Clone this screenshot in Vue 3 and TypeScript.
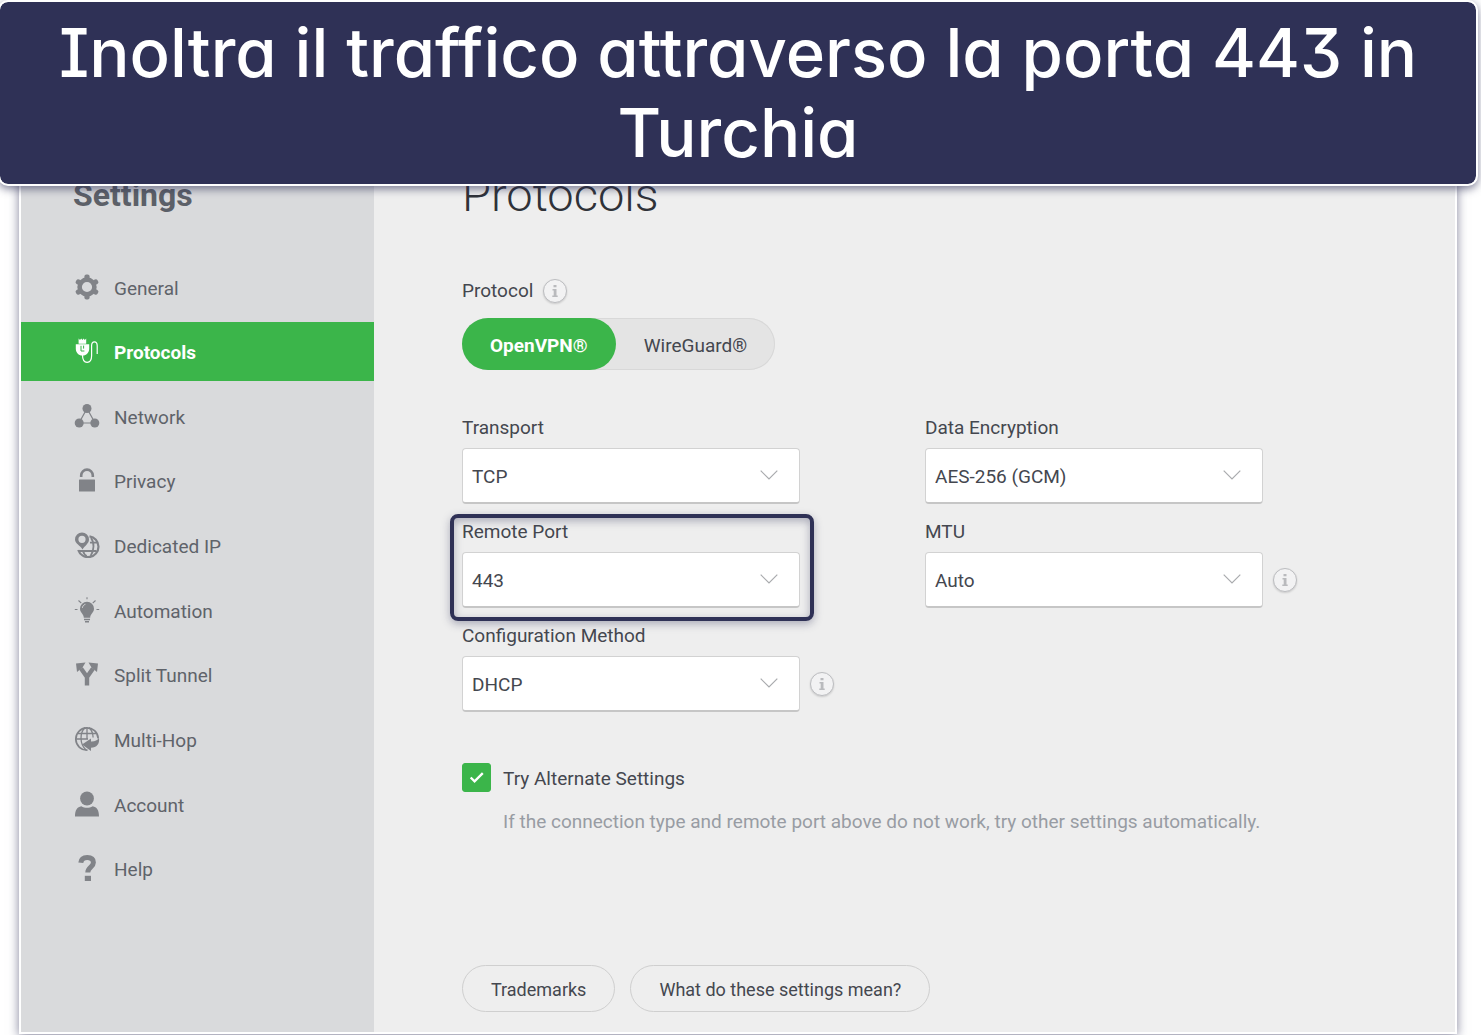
<script setup lang="ts">
import { ref } from 'vue'

type Field = {
  id: string
  label: string
  value: string
  options: string[]
  info?: boolean
  highlight?: boolean
}

const menu = [
  { id: 'general', label: 'General' },
  { id: 'protocols', label: 'Protocols' },
  { id: 'network', label: 'Network' },
  { id: 'privacy', label: 'Privacy' },
  { id: 'dedicated', label: 'Dedicated IP' },
  { id: 'automation', label: 'Automation' },
  { id: 'split', label: 'Split Tunnel' },
  { id: 'multihop', label: 'Multi-Hop' },
  { id: 'account', label: 'Account' },
  { id: 'help', label: 'Help' },
]
const active = ref('protocols')

const protocols = ['OpenVPN®', 'WireGuard®']
const protocol = ref('OpenVPN®')

const fields = ref<Field[]>([
  { id: 'transport', label: 'Transport', value: 'TCP', options: ['TCP', 'UDP'] },
  { id: 'encryption', label: 'Data Encryption', value: 'AES-256 (GCM)', options: ['AES-256 (GCM)', 'AES-128 (GCM)'] },
  { id: 'port', label: 'Remote Port', value: '443', options: ['443', '80', '8443'], highlight: true },
  { id: 'mtu', label: 'MTU', value: 'Auto', options: ['Auto', 'Small Packets'], info: true },
  { id: 'method', label: 'Configuration Method', value: 'DHCP', options: ['DHCP', 'Static'], info: true },
])
const alternate = ref(true)
</script>

<template>
  <div class="page">
    <header class="banner">Inoltra il traffico attraverso la porta 443 in Turchia</header>

    <div class="window">
      <aside class="sidebar">
        <h2 class="sidebar-title">Settings</h2>
        <nav class="menu">
          <a
            v-for="item in menu"
            :key="item.id"
            href="#"
            class="menu-item"
            :class="{ active: item.id === active }"
            @click.prevent="active = item.id"
          >
            <svg class="menu-icon" viewBox="0 0 26 26" aria-hidden="true">
              <g v-if="item.id === 'general'">
                <circle cx="13" cy="13" r="7.4" fill="none" stroke="currentColor" stroke-width="4.6" />
                <g fill="currentColor">
                  <rect v-for="a in [0, 60, 120, 180, 240, 300]" :key="a" x="10.4" y="0.5" width="5.2" height="5" rx="2" :transform="`rotate(${a} 13 13)`" />
                </g>
              </g>
              <g v-else-if="item.id === 'protocols'">
                <path d="M4.600 .500l1.400 1.500 1.200-1.500 1.200 1.500 1.200-1.500 1.200 1.500 1.400-1.500v5.200H4.600zM1.800 6.200h13.400v4.600c0 3.600-2.600 6.200-5 6.600H6.800c-2.400-.4-5-3-5-6.600z" fill="currentColor" />
                <path d="M7 7.800v5.200h3.400M9.600 7.600v3" fill="none" stroke="#3bb54a" stroke-width="1" />
                <path d="M8.500 17c0 5 1.200 7.300 4.600 7.300 3.600 0 4.500-2.500 4.500-6.500V7.800c0-2.700 1-4 2.800-4s2.800 1.400 2.800 4V16" fill="none" stroke="currentColor" stroke-width="1.200" />
              </g>
              <g v-else-if="item.id === 'network'">
                <path d="M13 5.500L5 20h16z" fill="none" stroke="currentColor" stroke-width="1.200" />
                <g fill="currentColor">
                  <circle cx="13" cy="5.500" r="4.500" />
                  <circle cx="5.200" cy="20" r="4.500" />
                  <circle cx="20.800" cy="20" r="4.500" />
                </g>
              </g>
              <g v-else-if="item.id === 'privacy'">
                <rect x="5" y="12.500" width="16" height="12" rx="0.500" fill="currentColor" />
                <path d="M7.200 10V8.400a5.800 5.800 0 0 1 11.600 0V10" fill="none" stroke="currentColor" stroke-width="2.600" />
              </g>
              <g v-else-if="item.id === 'dedicated'">
                <path d="M15.500 4.400A10.400 10.400 0 1 1 4.200 18" fill="none" stroke="currentColor" stroke-width="2.200" />
                <path d="M17 6c3.500 4.500 3.300 12-.4 18M9 19c.8 2.600 2.200 4.300 3.800 5M16 10.600h8M5 19h17.500" fill="none" stroke="currentColor" stroke-width="1.800" />
                <path fill-rule="evenodd" d="M8 .500a7 7 0 0 1 7 7c0 4-4 6-6.500 10C6.500 13.600 1 11.500 1 7.500a7 7 0 0 1 7-7zm0 3.200a3.600 3.600 0 1 0 0 7.200 3.600 3.600 0 0 0 0-7.200z" fill="currentColor" />
              </g>
              <g v-else-if="item.id === 'automation'">
                <path d="M13 4.800a7 7 0 0 1 7 7c0 4.200-3.800 4.900-3.800 9H9.800c0-4.100-3.800-4.800-3.800-9a7 7 0 0 1 7-7z" fill="currentColor" />
                <path d="M10 22.500h6M11 24.700h4" stroke="currentColor" stroke-width="1.400" />
                <path d="M13 .200v2M.800 12.500H3.500M22.500 12.500h2.700M4.500 3.500l2.800 2.700M21.500 3.500l-2.800 2.700" stroke="currentColor" stroke-width="1.100" fill="none" />
                <path d="M8.400 10.800c.2-1.700 1.400-3 3-3.500" stroke="#d9dadc" stroke-width="1" fill="none" />
              </g>
              <g v-else-if="item.id === 'split'">
                <path d="M13 24.500V16L7 7.500M13 16L19 7.500" fill="none" stroke="currentColor" stroke-width="4.400" />
                <path d="M2 2.500L11.500 1.500 8.500 6.500 3 11zM24 2.500L14.500 1.500 17.500 6.500 23 11z" fill="currentColor" />
              </g>
              <g v-else-if="item.id === 'multihop'">
                <path d="M13.500 24.200A11.200 11.200 0 1 1 24.200 12.500" fill="none" stroke="currentColor" stroke-width="1.700" />
                <path d="M11 1.500C5.500 7 5.500 18 12 24M15 1.500c2.800 2.700 4 6 4.100 10M13 2v11M4 7.500h18M1.500 13H14" fill="none" stroke="currentColor" stroke-width="1.300" />
                <path d="M8 18.500l9-6v3c4 .2 6.300-1.300 8-3.600.8 6-2.300 9.600-8 9.800V25z" fill="currentColor" />
              </g>
              <g v-else-if="item.id === 'account'" fill="currentColor">
                <circle cx="13" cy="7.500" r="6.900" />
                <path d="M1 25.500c0-6.500 2.300-9.600 6.300-10.300 3.600 2 7.800 2 11.400 0 4 .7 6.300 3.800 6.300 10.300z" />
              </g>
              <g v-else>
                <path d="M6.800 7.800C7.200 3.800 9.600 2.500 13.200 2.500c4 0 6.200 1.800 6.200 5 0 4.800-5.600 4.500-5.600 10" fill="none" stroke="currentColor" stroke-width="5" />
                <rect x="10.800" y="20.800" width="6.200" height="5.200" fill="currentColor" />
              </g>
            </svg>
            <span>{{ item.label }}</span>
          </a>
        </nav>
      </aside>

      <main class="content">
        <h1 class="title">Protocols</h1>

        <div class="protocol-label">
          <span id="protocol-label">Protocol</span>
          <button type="button" class="info" aria-label="About protocols">
            <svg viewBox="0 0 22 22"><path d="M9.500 5h3v2.200h-3zM8.500 9h4v6.600h1.200V17H8.300v-1.400h1.400v-5.200H8.500z" fill="currentColor" /></svg>
          </button>
        </div>
        <div class="toggle" role="group" aria-labelledby="protocol-label">
          <button
            v-for="name in protocols"
            :key="name"
            type="button"
            class="toggle-option"
            :class="{ selected: name === protocol }"
            @click="protocol = name"
          >{{ name }}</button>
        </div>

        <div class="fields">
          <div v-for="field in fields" :key="field.id" class="field" :class="{ highlight: field.highlight }">
            <label :for="field.id">{{ field.label }}</label>
            <div class="select-row">
              <div class="select-box">
                <select :id="field.id" v-model="field.value">
                  <option v-for="option in field.options" :key="option">{{ option }}</option>
                </select>
                <svg class="chevron" viewBox="0 0 18 10" aria-hidden="true"><path d="M.700.700L9 9 17.300.700" fill="none" stroke="currentColor" stroke-width="1.200" /></svg>
              </div>
              <button v-if="field.info" type="button" class="info" :aria-label="`About ${field.label}`">
                <svg viewBox="0 0 22 22"><path d="M9.500 5h3v2.200h-3zM8.500 9h4v6.600h1.200V17H8.300v-1.400h1.400v-5.200H8.500z" fill="currentColor" /></svg>
              </button>
            </div>
          </div>
        </div>

        <label class="check">
          <input v-model="alternate" type="checkbox" />
          <svg class="tick" viewBox="0 0 30 30" aria-hidden="true"><path d="M9 15l4 4 8.500-8.500" fill="none" stroke="#fff" stroke-width="2.400" /></svg>
          <span>Try Alternate Settings</span>
        </label>
        <p class="hint">If the connection type and remote port above do not work, try other settings automatically.</p>

        <div class="actions">
          <button type="button">Trademarks</button>
          <button type="button">What do these settings mean?</button>
        </div>
      </main>
    </div>
  </div>
</template>

<style>
body {
  margin: 0;
  background: #fff;
}
</style>

<style scoped>
.page,
.page * {
  box-sizing: border-box;
}
.page {
  position: relative;
  min-height: 100vh;
  padding: 100px 24px 1px 19px;
  overflow: hidden;
  font-family: Roboto, "Liberation Sans", sans-serif;
  font-size: 19px;
  line-height: 24px;
  color: #44474f;
}
.banner {
  position: absolute;
  z-index: 2;
  top: 0;
  left: -2px;
  right: 3px;
  padding: 11px 40px;
  border: 2px solid #fff;
  border-radius: 10px;
  background: #2f3156;
  background-clip: padding-box;
  box-shadow: 0 3px 8px rgba(47, 49, 86, 0.6);
  color: #fff;
  font-family: Inter, "Open Sans", sans-serif;
  font-size: 67px;
  font-weight: 500;
  line-height: 80px;
  text-align: center;
  font-feature-settings: "cv08", "cv09", "cv11";
}
.window {
  display: flex;
  min-height: calc(100vh - 101px);
  border: 2px solid #fff;
  background: #eee;
  box-shadow: 0 2px 10px rgba(47, 49, 86, 0.6);
}
.sidebar {
  flex: 0 0 353px;
  padding-top: 76px;
  background: #d9dadc;
}
.sidebar-title {
  margin: 0 0 45px 52px;
  font-size: 32px;
  line-height: 34px;
  font-weight: 700;
  color: #5c6068;
}
.menu {
  display: flex;
  flex-direction: column;
  justify-content: space-between;
  height: 641px;
}
.menu-item {
  display: flex;
  align-items: center;
  gap: 14px;
  height: 59px;
  padding-left: 53px;
  color: #5f636a;
  text-decoration: none;
}
.menu-icon {
  width: 26px;
  height: 26px;
  color: #818388;
}
.menu-item span {
  padding-top: 4px;
}
.menu-item.active {
  background: #3bb54a;
  color: #fff;
  font-weight: 700;
}
.menu-item.active .menu-icon {
  color: #fff;
}
.content {
  flex: 1;
  min-width: 0;
  padding: 69px 24px 20px 88px;
}
.title {
  margin: 0;
  font-size: 47px;
  line-height: 48px;
  font-weight: 300;
  color: #2f3238;
}
.protocol-label {
  display: flex;
  align-items: center;
  gap: 10px;
  margin-top: 60px;
}
.info {
  display: block;
  width: 24px;
  height: 24px;
  padding: 0;
  border: 1px solid #bcbdc0;
  border-radius: 50%;
  background: #f2f2f3;
  box-shadow: 0 1px 2px rgba(0, 0, 0, 0.15);
  color: #b9babd;
}
.info svg {
  display: block;
  width: 22px;
  height: 22px;
}
.toggle {
  display: inline-flex;
  margin-top: 15px;
  border-radius: 26px;
  background: #e4e4e4;
  box-shadow: inset 0 0 0 1px #d8d8d8;
}
.toggle-option {
  height: 52px;
  padding: 3px 28px 0;
  border: 0;
  border-radius: 26px;
  background: none;
  color: inherit;
  font: inherit;
}
.toggle-option.selected {
  background: #3bb54a;
  color: #fff;
  font-weight: 700;
}
.fields {
  display: grid;
  grid-template-columns: 338px 338px;
  gap: 14px 125px;
  margin-top: 44px;
}
.field {
  position: relative;
}
.field > label {
  display: block;
  line-height: 28px;
  padding-bottom: 6px;
}
.field.highlight::after {
  content: "";
  position: absolute;
  inset: -4px -14px -13px -12px;
  border: 4px solid #2f3156;
  border-radius: 8px;
  box-shadow: 0 3px 8px rgba(47, 49, 86, 0.35), inset 0 3px 8px rgba(47, 49, 86, 0.35);
  pointer-events: none;
}
.select-row {
  display: flex;
  align-items: center;
  gap: 10px;
}
.select-box {
  position: relative;
  flex: 0 0 338px;
}
.select-box select {
  display: block;
  width: 100%;
  height: 56px;
  padding: 2px 48px 0 9px;
  border: 1px solid #d2d2d2;
  border-bottom: 2px solid #c6c6c6;
  border-radius: 4px;
  background: #fff;
  color: inherit;
  font: inherit;
  appearance: none;
}
.chevron {
  position: absolute;
  top: 22px;
  right: 22px;
  width: 18px;
  height: 10px;
  color: #a9abae;
  pointer-events: none;
}
.check {
  position: relative;
  display: flex;
  align-items: center;
  gap: 12px;
  width: fit-content;
  margin-top: 51px;
}
.check input {
  width: 29px;
  height: 29px;
  margin: 0;
  border: 1px solid #c6c6c6;
  border-radius: 3px;
  background: #fff;
  appearance: none;
}
.check input:checked {
  border-color: #3bb54a;
  background: #3bb54a;
}
.tick {
  position: absolute;
  left: 0;
  width: 29px;
  height: 29px;
  pointer-events: none;
}
.check span {
  padding-top: 2px;
}
.hint {
  margin: 18px 0 0 41px;
  color: #989ca3;
}
.actions {
  display: flex;
  gap: 15px;
  margin-top: 131px;
}
.actions button {
  height: 47px;
  padding: 2px 28px 0;
  border: 1px solid #cfcfcf;
  border-radius: 24px;
  background: none;
  color: inherit;
  font: inherit;
  font-size: 18px;
}
</style>
